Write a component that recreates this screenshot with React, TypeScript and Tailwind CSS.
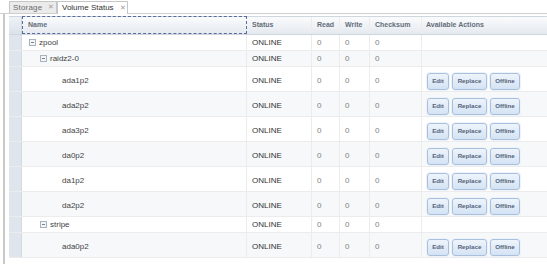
import React from "react";

type Row = {
  name: string;
  level: 0 | 1 | 2;
  group?: boolean;
  leaf?: boolean;
};

const rows: Row[] = [
  { name: "zpool", level: 0, group: true },
  { name: "raidz2-0", level: 1, group: true },
  { name: "ada1p2", level: 2, leaf: true },
  { name: "ada2p2", level: 2, leaf: true },
  { name: "ada3p2", level: 2, leaf: true },
  { name: "da0p2", level: 2, leaf: true },
  { name: "da1p2", level: 2, leaf: true },
  { name: "da2p2", level: 2, leaf: true },
  { name: "stripe", level: 1, group: true },
  { name: "ada0p2", level: 2, leaf: true },
];

const cols = "grid grid-cols-[13px_225px_65px_28px_30px_52px_1fr]";

const Collapse = () => (
  <span className="w-[7px] h-[7px] border border-[#a9b3bf] bg-[#f3f5f8] flex items-center justify-center mr-[3px]">
    <span className="w-[3px] h-px bg-[#7a8594]" />
  </span>
);

const ActionButton = ({ label, w }: { label: string; w: string }) => (
  <button
    className={`${w} h-[17px] rounded-[3px] border border-[#a8c0de] bg-gradient-to-b from-[#eef4fb] to-[#d4e3f4] text-[6.2px] font-bold text-[#55647a] flex items-center justify-center shadow-[0_0_0_1px_#eef3f9]`}
  >
    {label}
  </button>
);

const Cell = ({
  children,
  className = "",
}: {
  children?: React.ReactNode;
  className?: string;
}) => (
  <div
    className={`flex items-center border-r border-[#ececec] pl-[5px] ${className}`}
  >
    {children}
  </div>
);

export default function App() {
  return (
    <div className="w-[547px] h-[264px] bg-white overflow-hidden font-['Liberation_Sans',Arial,sans-serif] text-[8px]">
      {/* tab bar */}
      <div className="flex h-[14px] pl-[9px] pt-[1px] border-b border-[#cfcfcf] whitespace-nowrap">
        <div className="flex items-center gap-[6px] pl-[3px] pr-[4px] w-[48px] bg-[#ebebeb] border border-b-0 border-[#c6c6c6] text-[#6a6a6a] tracking-[0.2px]">
          <span>Storage</span>
          <span className="text-[#a0a0a0] text-[7px]">✕</span>
        </div>
        <div className="flex items-center gap-[6px] pl-[4px] pr-[4px] w-[71px] bg-white border border-b-0 border-[#c6c6c6] text-[#333] -mb-px">
          <span>Volume Status</span>
          <span className="text-[#a0a0a0] text-[7px]">✕</span>
        </div>
      </div>

      {/* body */}
      <div className="flex h-[250px]">
        <div className="w-[3px]" />
        <div className="border-l-[2px] border-double border-[#c9c9c9] w-[3px]" />
        <div className="w-[3px]" />
        <div className="flex-1 flex flex-col pt-[2px]">
          {/* header */}
          <div
            className={`${cols} h-[19px] bg-gradient-to-b from-[#fafbfc] to-[#e5eaf0] border-t border-b border-[#cfd6de] text-[7px] font-bold text-[#646d79]`}
          >
            <div className="bg-gradient-to-b from-[#eef2f6] to-[#dbe2ea] border-r border-[#cfd6de]" />
            <div className="flex items-center pl-[5px] border border-dashed border-[#5a6a9a] -mt-px">
              Name
            </div>
            <Cell className="border-[#dde2e8]">Status</Cell>
            <Cell className="border-[#dde2e8] pl-[4px]">Read</Cell>
            <Cell className="border-[#dde2e8] pl-[3px]">Write</Cell>
            <Cell className="border-[#dde2e8] pl-[4px]">Checksum</Cell>
            <div className="flex items-center pl-[4px]">Available Actions</div>
          </div>

          {/* rows */}
          {rows.map((r, i) => {
            const pad = r.leaf ? "pt-[4px]" : "";
            return (
              <div
                key={r.name}
                className={`${cols} ${r.leaf ? "h-[25px]" : "h-[16px]"} border-b border-[#ececec] ${
                  i % 2 === 1 ? "bg-[#f6f8fa]" : "bg-white"
                }`}
              >
                <div className="bg-[#dfe5ec] border-r border-[#d3dae3]" />
                <Cell
                  className={`text-[#444] ${pad} ${
                    r.level === 0 ? "pl-[7px]" : r.level === 1 ? "pl-[18px]" : "pl-[40px]"
                  }`}
                >
                  {r.group && <Collapse />}
                  {r.name}
                </Cell>
                <Cell className={`text-[#333] ${pad}`}>ONLINE</Cell>
                <Cell className={`text-[#808080] ${pad}`}>0</Cell>
                <Cell className={`text-[#808080] ${pad}`}>0</Cell>
                <Cell className={`text-[#808080] ${pad}`}>0</Cell>
                <div className={`flex items-center pl-[5px] gap-[3px] ${pad}`}>
                  {r.leaf && (
                    <>
                      <ActionButton label="Edit" w="w-[22px]" />
                      <ActionButton label="Replace" w="w-[35px]" />
                      <ActionButton label="Offline" w="w-[30px]" />
                    </>
                  )}
                </div>
              </div>
            );
          })}
          <div className="flex-1" />
        </div>
      </div>
    </div>
  );
}
